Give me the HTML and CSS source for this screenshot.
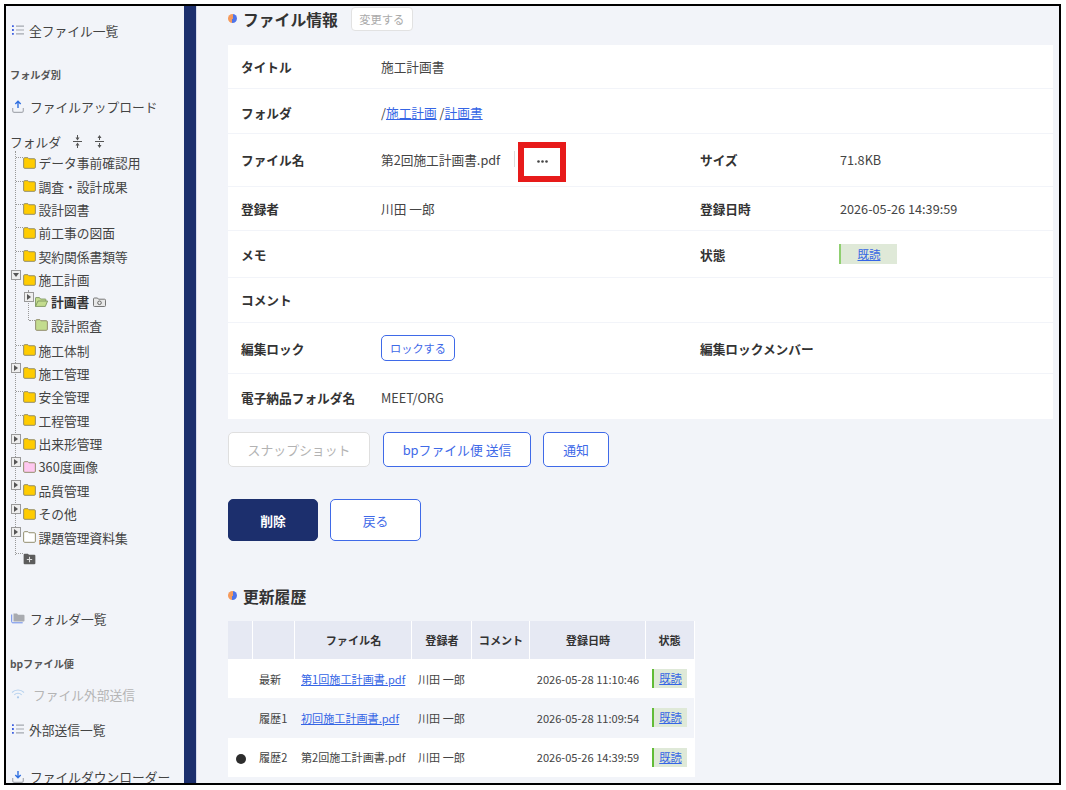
FILE: index.html
```html
<!DOCTYPE html>
<html>
	<head>
		<meta charset="UTF-8">
		<title>ファイル情報</title>
		<link rel="stylesheet" href="styles.css">
	</head>
	<body>
		<svg class="defs">
			<symbol id="i-list" viewBox="0 0 12 10">
				<path d="M4 1.200h8M4 5h8M4 8.800h8" stroke="#a4a8b0" stroke-width="1.200" fill="none"/>
				<path d="M0 .3h1.800v1.800H0zM0 4.100h1.800v1.800H0zM0 7.900h1.800v1.800H0z" fill="#3f5fe0"/>
			</symbol>
			<symbol id="i-folder" viewBox="0.4 0 12.2 11">
				<path d="M1 1.500a1 1 0 0 1 1-1h3l1 1h5a1 1 0 0 1 1 1v7a1 1 0 0 1-1 1H2a1 1 0 0 1-1-1z" fill="currentColor" stroke="#8f8a68" stroke-width=".9"/>
			</symbol>
			<symbol id="i-open" viewBox="0.5 0.5 13.2 10">
				<path d="M1 10V1.500a.5.5 0 0 1 .5-.5H5l1.200 1.500H11a.5.5 0 0 1 .5.5v1.500" fill="#c3dc8e" stroke="#7d9560" stroke-width=".9"/>
				<path d="M1 10l2.500-5.500H13.300L11 10z" fill="#c3dc8e" stroke="#7d9560" stroke-width=".9"/>
			</symbol>
		</svg>

		<div class="frame">
			<!-- 左メニュー -->
			<div class="side">
				<a class="menu m-all"><svg class="ico"><use href="#i-list"/></svg>全ファイル一覧</a>
				<div class="side-head m-by">フォルダ別</div>
				<a class="menu m-up">
					<svg class="ico tall" viewBox="0 0 12 13"><path d="M6 8V1.500M3.300 4L6 1.300 8.700 4" stroke="#2f6fe0" stroke-width="1.400" fill="none"/><path d="M.7 8v2.800a1.500 1.500 0 0 0 1.500 1.500h7.600a1.500 1.500 0 0 0 1.500-1.500V8" stroke="#a8abb2" stroke-width="1.200" fill="none"/></svg>
					ファイルアップロード
				</a>
				<div class="tree-head">
					フォルダ
					<svg class="tog" viewBox="0 0 11 13"><path d="M1 6.500h9M5.500 0v3M5.500 13v-3" stroke="#555" fill="none"/><path d="M3.500 2.500h4l-2 3zM3.500 10.500h4l-2-3z" fill="#555"/></svg>
					<svg class="tog" viewBox="0 0 11 13"><path d="M1 6.500h9M5.500 2v3M5.500 8v3" stroke="#555" fill="none"/><path d="M3.500 3h4l-2-3zM3.500 10h4l-2 3z" fill="#555"/></svg>
				</div>

				<ul class="tree">
					<li class="node"><span class="tick"></span><svg class="fd yellow"><use href="#i-folder"/></svg>データ事前確認用</li>
					<li class="node"><span class="tick"></span><svg class="fd yellow"><use href="#i-folder"/></svg>調査・設計成果</li>
					<li class="node"><span class="tick"></span><svg class="fd yellow"><use href="#i-folder"/></svg>設計図書</li>
					<li class="node"><span class="tick"></span><svg class="fd yellow"><use href="#i-folder"/></svg>前工事の図面</li>
					<li class="node"><span class="tick"></span><svg class="fd yellow"><use href="#i-folder"/></svg>契約関係書類等</li>
					<li class="node"><span class="exp down"></span><svg class="fd yellow"><use href="#i-folder"/></svg>施工計画</li>
					<li>
						<ul class="sub">
							<li class="node"><span class="exp"></span><svg class="fd"><use href="#i-open"/></svg><b>計画書</b>
								<svg class="cam" viewBox="0 0 13 11"><path d="M1.500 1.500h3l1 1.200h6a1 1 0 0 1 1 1v5.300a1 1 0 0 1-1 1h-10a1 1 0 0 1-1-1V2.500a1 1 0 0 1 1-1z" fill="#e8e8e8" stroke="#777"/><circle cx="6.500" cy="6.300" r="1.800" fill="none" stroke="#666"/></svg>
							</li>
							<li class="node"><span class="tick"></span><svg class="fd green"><use href="#i-folder"/></svg>設計照査</li>
						</ul>
					</li>
					<li class="node"><span class="tick"></span><svg class="fd yellow"><use href="#i-folder"/></svg>施工体制</li>
					<li class="node"><span class="exp"></span><svg class="fd yellow"><use href="#i-folder"/></svg>施工管理</li>
					<li class="node"><span class="tick"></span><svg class="fd yellow"><use href="#i-folder"/></svg>安全管理</li>
					<li class="node"><span class="tick"></span><svg class="fd yellow"><use href="#i-folder"/></svg>工程管理</li>
					<li class="node"><span class="exp"></span><svg class="fd yellow"><use href="#i-folder"/></svg>出来形管理</li>
					<li class="node"><span class="exp"></span><svg class="fd pink"><use href="#i-folder"/></svg>360度画像</li>
					<li class="node"><span class="exp"></span><svg class="fd yellow"><use href="#i-folder"/></svg>品質管理</li>
					<li class="node"><span class="exp"></span><svg class="fd yellow"><use href="#i-folder"/></svg>その他</li>
					<li class="node"><span class="exp"></span><svg class="fd white"><use href="#i-folder"/></svg>課題管理資料集</li>
					<li class="node last"><span class="tick"></span>
						<svg class="fd" viewBox="0.4 0 12.2 11"><path d="M1 1.500a1 1 0 0 1 1-1h3l1 1h5a1 1 0 0 1 1 1v7a1 1 0 0 1-1 1H2a1 1 0 0 1-1-1z" fill="#5c5c5c"/><path d="M6.500 3.500v5M4 6h5" stroke="#ddd"/></svg>
					</li>
				</ul>

				<a class="menu m-list">
					<svg class="ico wide" viewBox="0 0 14 11"><path d="M.7 2v7.300a1 1 0 0 0 1 1h10" stroke="#6a8ae8" fill="none"/><path d="M2.500 1h3.500l1 1.300h5.500a1 1 0 0 1 1 1V8a1 1 0 0 1-1 1H2.500z" fill="#a9abb0"/></svg>
					フォルダ一覧
				</a>
				<div class="side-head m-bp">bpファイル便</div>
				<a class="menu m-send off">
					<svg class="ico wide w2" viewBox="0 0 14 10"><path d="M1 3.500a8.500 8.500 0 0 1 12 0M3.300 5.800a5.200 5.200 0 0 1 7.400 0" stroke="#b9d3ef" stroke-width="1.100" fill="none"/><circle cx="7" cy="8.300" r="1.100" fill="#a9c8ec"/></svg>
					ファイル外部送信
				</a>
				<a class="menu m-sent"><svg class="ico"><use href="#i-list"/></svg>外部送信一覧</a>
				<a class="menu m-down">
					<svg class="ico tall" viewBox="0 0 12 13"><path d="M6 1v6.500M3.300 5L6 7.700 8.700 5" stroke="#2f6fe0" stroke-width="1.400" fill="none"/><path d="M.7 8v2.800a1.500 1.500 0 0 0 1.500 1.500h7.600a1.500 1.500 0 0 0 1.500-1.500V8" stroke="#a8abb2" stroke-width="1.200" fill="none"/></svg>
					ファイルダウンローダー
				</a>
			</div>
			<div class="bar"></div>

			<!-- メイン -->
			<div class="main">
				<div class="title-line">
					<h2 class="title">ファイル情報</h2>
					<button class="btn-change">変更する</button>
				</div>

				<div class="info">
					<div class="row r1">
						<div class="lbl">タイトル</div><div>施工計画書</div>
					</div>
					<div class="row r2">
						<div class="lbl">フォルダ</div><div>/<a class="lnk">施工計画</a> /<a class="lnk">計画書</a></div>
					</div>
					<div class="row r3">
						<div class="lbl">ファイル名</div>
						<div class="fname">第2回施工計画書.pdf<span class="sep"></span>
							<span class="more"><svg width="11" height="3" viewBox="0 0 11 3"><circle cx="1.500" cy="1.500" r="1.300"/><circle cx="5.500" cy="1.500" r="1.300"/><circle cx="9.500" cy="1.500" r="1.300"/></svg></span>
						</div>
						<div class="lbl">サイズ</div><div>71.8KB</div>
					</div>
					<div class="row r4">
						<div class="lbl">登録者</div><div>川田 一郎</div>
						<div class="lbl">登録日時</div><div>2026-05-26 14:39:59</div>
					</div>
					<div class="row r5">
						<div class="lbl">メモ</div><div></div>
						<div class="lbl">状態</div><div><span class="read wide-read"><a class="lnk">既読</a></span></div>
					</div>
					<div class="row r6">
						<div class="lbl">コメント</div>
					</div>
					<div class="row r7">
						<div class="lbl">編集ロック</div><div><button class="btn-lock">ロックする</button></div>
						<div class="lbl">編集ロックメンバー</div>
					</div>
					<div class="row r8">
						<div class="lbl">電子納品フォルダ名</div><div>MEET/ORG</div>
					</div>
				</div>

				<div class="btns">
					<button class="btn b-snap">スナップショット</button>
					<button class="btn b-bp">bpファイル便 送信</button>
					<button class="btn b-notice">通知</button>
				</div>
				<div class="btns2">
					<button class="btn b-del">削除</button>
					<button class="btn b-back">戻る</button>
				</div>

				<h2 class="title t-hist">更新履歴</h2>
				<table class="hist">
					<thead>
						<tr>
							<th class="c1"></th><th class="c2"></th><th class="c3">ファイル名</th><th class="c4">登録者</th><th class="c5">コメント</th><th class="c6">登録日時</th><th class="c7">状態</th>
						</tr>
					</thead>
					<tbody>
						<tr>
							<td></td><td class="ver">最新</td><td><a class="lnk">第1回施工計画書.pdf</a></td><td>川田 一郎</td><td></td><td class="ctr">2026-05-28 11:10:46</td><td class="ctr"><span class="read"><a class="lnk">既読</a></span></td>
						</tr>
						<tr class="odd">
							<td></td><td class="ver">履歴1</td><td><a class="lnk">初回施工計画書.pdf</a></td><td>川田 一郎</td><td></td><td class="ctr">2026-05-28 11:09:54</td><td class="ctr"><span class="read"><a class="lnk">既読</a></span></td>
						</tr>
						<tr>
							<td class="ctr"><span class="dot"></span></td><td class="ver">履歴2</td><td>第2回施工計画書.pdf</td><td>川田 一郎</td><td></td><td class="ctr">2026-05-26 14:39:59</td><td class="ctr"><span class="read"><a class="lnk">既読</a></span></td>
						</tr>
					</tbody>
				</table>
			</div>
		</div>
	</body>
</html>
```

FILE: styles.css
```css
*{
	padding:0;
	margin:0;
	box-sizing:border-box;
}
ul,li{
	list-style:none;
}
html,body{
	background:#fff;
}
body{
	font-family:"Noto Sans CJK JP","Noto Sans",sans-serif;
	color:#444;
	font-size:12.7px;
}
.defs{
	width:0;
	height:0;
	display:block;
}
.frame{
	width:1057px;
	height:781px;
	margin:4px 0 0 4px;
	border:2px solid #000;
	overflow:hidden;
	display:flex;
	background:#f2f4f9;
}

/* sidebar */
.side{
	width:178px;
	flex:none;
	padding:14px 0 0 4px;
	white-space:nowrap;
}
.menu{
	display:flex;
	align-items:center;
	height:20px;
	font-size:12.75px;
	color:#444;
}
.ico{
	width:12px;
	height:12px;
	margin:0 5px 0 2px;
	flex:none;
}
.ico.tall{
	height:13px;
	margin-right:6px;
}
.ico.wide{
	width:14px;
	margin:0 5px 0 1px;
}
.ico.w2{
	margin-right:8px;
}
.side-head{
	height:16px;
	line-height:16px;
	font-size:10.2px;
	font-weight:bold;
	color:#555;
}
.m-by{margin-top:27px;}
.m-up{margin-top:13px;}
.m-list{margin-top:53px;}
.m-bp{margin-top:28px;}
.m-send{margin-top:12px;}
.m-sent{margin-top:15px;}
.m-down{margin-top:27px;}
.off{
	color:#b5b5b5;
}
.tree-head{
	display:flex;
	align-items:center;
	height:20px;
	margin-top:15px;
	font-size:12.75px;
}
.tog{
	width:11px;
	height:13px;
	margin-left:11px;
}
.tree{
	margin:0 0 0 5px;
	border-left:1px dotted #999;
	height:404px;
}
.node{
	display:flex;
	align-items:center;
	height:23.4px;
	font-size:12.75px;
	color:#444;
}
.node.last{
	height:20px;
}
.tick{
	width:7px;
	border-top:1px dotted #999;
	margin-top:-10px;
	flex:none;
}
.exp{
	width:10px;
	height:10px;
	margin:-10px 2px 0 -5px;
	flex:none;
	border:1px solid #999;
	background:#eee;
	display:flex;
	align-items:center;
	justify-content:center;
}
.exp:after{
	content:"";
	border-left:4px solid #555;
	border-top:3px solid transparent;
	border-bottom:3px solid transparent;
}
.exp.down:after{
	border-top:4px solid #555;
	border-left:3px solid transparent;
	border-right:3px solid transparent;
	border-bottom:0;
}
.fd{
	width:13px;
	height:12px;
	margin-right:2.5px;
	flex:none;
}
.yellow{color:#ffcc00;}
.green{color:#c3dc8e;}
.pink{color:#ffc8f0;}
.white{color:#fff;}
.sub{
	margin:-1.4px 0 18.4px 12px;
	border-left:1px dotted #999;
	height:30px;
}
.sub .exp{
	margin-right:1px;
}
.sub .tick{
	width:6px;
}
.sub .fd{
	margin-right:3px;
}
.node b{
	font-weight:bold;
	color:#333;
}
.cam{
	width:13px;
	height:12px;
	margin-left:4px;
}
.bar{
	width:13px;
	flex:none;
	background:#1c2f6d;
	border-right:1px solid #d5daeb;
}

/* main */
.main{
	flex:1;
	padding:0 6px 0 31px;
	min-width:0;
}
.title-line{
	display:flex;
	align-items:center;
	height:39px;
	padding-bottom:11px;
}
.title{
	font-size:15.8px;
	font-weight:bold;
	color:#333;
	line-height:28px;
	display:flex;
	align-items:center;
}
.title:before{
	content:"";
	width:9px;
	height:9px;
	margin-right:6px;
	border-radius:50%;
	background:linear-gradient(100deg,#f59a5c 50%,#4f74e8 50%);
	margin-top:-4px;
}
.btn-change{
	width:62px;
	height:24px;
	margin:-2px 0 0 13px;
	border:1px solid #e2e2e2;
	border-radius:4px;
	background:#fff;
	color:#aaa;
	font:11.3px "Noto Sans CJK JP",sans-serif;
}
.info{
	background:#fff;
}
.row{
	display:grid;
	grid-template-columns:140px 319px 140px 1fr;
	align-items:center;
	padding-left:13px;
	border-bottom:1px solid #f2f4f9;
	font-size:12.7px;
	color:#444;
}
.r1{height:44px;}
.r2{height:45px;padding-top:2px;}
.r3{height:53px;padding-bottom:2px;}
.r4{height:44px;}
.r5{height:47px;}
.r6{height:45px;padding-bottom:2px;}
.r7{height:51px;}
.r8{height:45px;border-bottom:0;padding-top:2px;}
.lbl{
	font-weight:bold;
	color:#333;
}
.lnk{
	color:#3565e5;
	text-decoration:underline;
}
.fname{
	display:flex;
	align-items:center;
}
.sep{
	width:1px;
	height:16px;
	margin:0 3px 0 14px;
	background:#ddd;
}
.more{
	width:48px;
	height:40px;
	margin-top:5px;
	border:6px solid #e71a1a;
	background:#fff;
	display:flex;
	align-items:center;
	justify-content:center;
}
.more svg{
	fill:#444;
}
.read{
	display:inline-block;
	width:35px;
	height:19px;
	line-height:18px;
	text-align:center;
	background:#dfe9d8;
	border-left:2px solid #62bc37;
	font-size:11.3px;
}
.wide-read{
	width:58px;
	height:20px;
	line-height:20px;
	margin-left:-1px;
	border-left-color:#8fcf70;
	font-size:11.5px;
}
.btn-lock{
	width:74px;
	height:26px;
	border:1px solid #3f6ae8;
	border-radius:5px;
	background:#fff;
	color:#3f6ae8;
	font:11.2px "Noto Sans CJK JP",sans-serif;
}
.btns{
	display:flex;
	margin-top:13px;
}
.btns2{
	display:flex;
	margin-top:32px;
}
.btn{
	background:#fff;
	border:1px solid #3f6ae8;
	border-radius:5px;
	color:#3f6ae8;
	font:12.85px "Noto Sans CJK JP",sans-serif;
}
.b-snap{
	width:142px;
	height:35px;
	border-color:#dfdfdf;
	color:#b3b3b3;
}
.b-bp{
	width:148px;
	height:35px;
	margin-left:13px;
}
.b-notice{
	width:66px;
	height:35px;
	margin-left:12px;
}
.b-del{
	width:90px;
	height:42px;
	background:#1c2f6d;
	border-color:#1c2f6d;
	color:#fff;
	font-weight:bold;
}
.b-back{
	width:91px;
	height:42px;
	margin-left:12px;
}
.t-hist{
	margin-top:42px;
}
.hist{
	margin-top:10px;
	width:466px;
	table-layout:fixed;
	border-collapse:collapse;
	font-size:11.1px;
	background:#fff;
}
.hist th{
	height:38px;
	background:#e6e9f3;
	border-right:1.5px solid #fff;
	padding-left:2px;
	font-size:11.1px;
	color:#333;
	font-weight:bold;
}
.hist th:last-child{
	padding-left:0;
}
.hist td{
	height:39.3px;
	padding-left:7px;
	white-space:nowrap;
	color:#444;
}
.hist td.ctr{
	padding-left:2px;
	text-align:center;
}
.hist td:last-child.ctr{
	padding-left:0;
}
.hist .odd td{
	background:#f2f4f9;
}
.c1{width:24px;}
.c2{width:42px;}
.c3{width:117px;}
.c4{width:60px;}
.c5{width:58px;}
.c6{width:116px;}
.c7{width:49px;}
.dot{
	display:inline-block;
	width:10px;
	height:10px;
	border-radius:50%;
	background:#2d2d2d;
	vertical-align:middle;
}
```
